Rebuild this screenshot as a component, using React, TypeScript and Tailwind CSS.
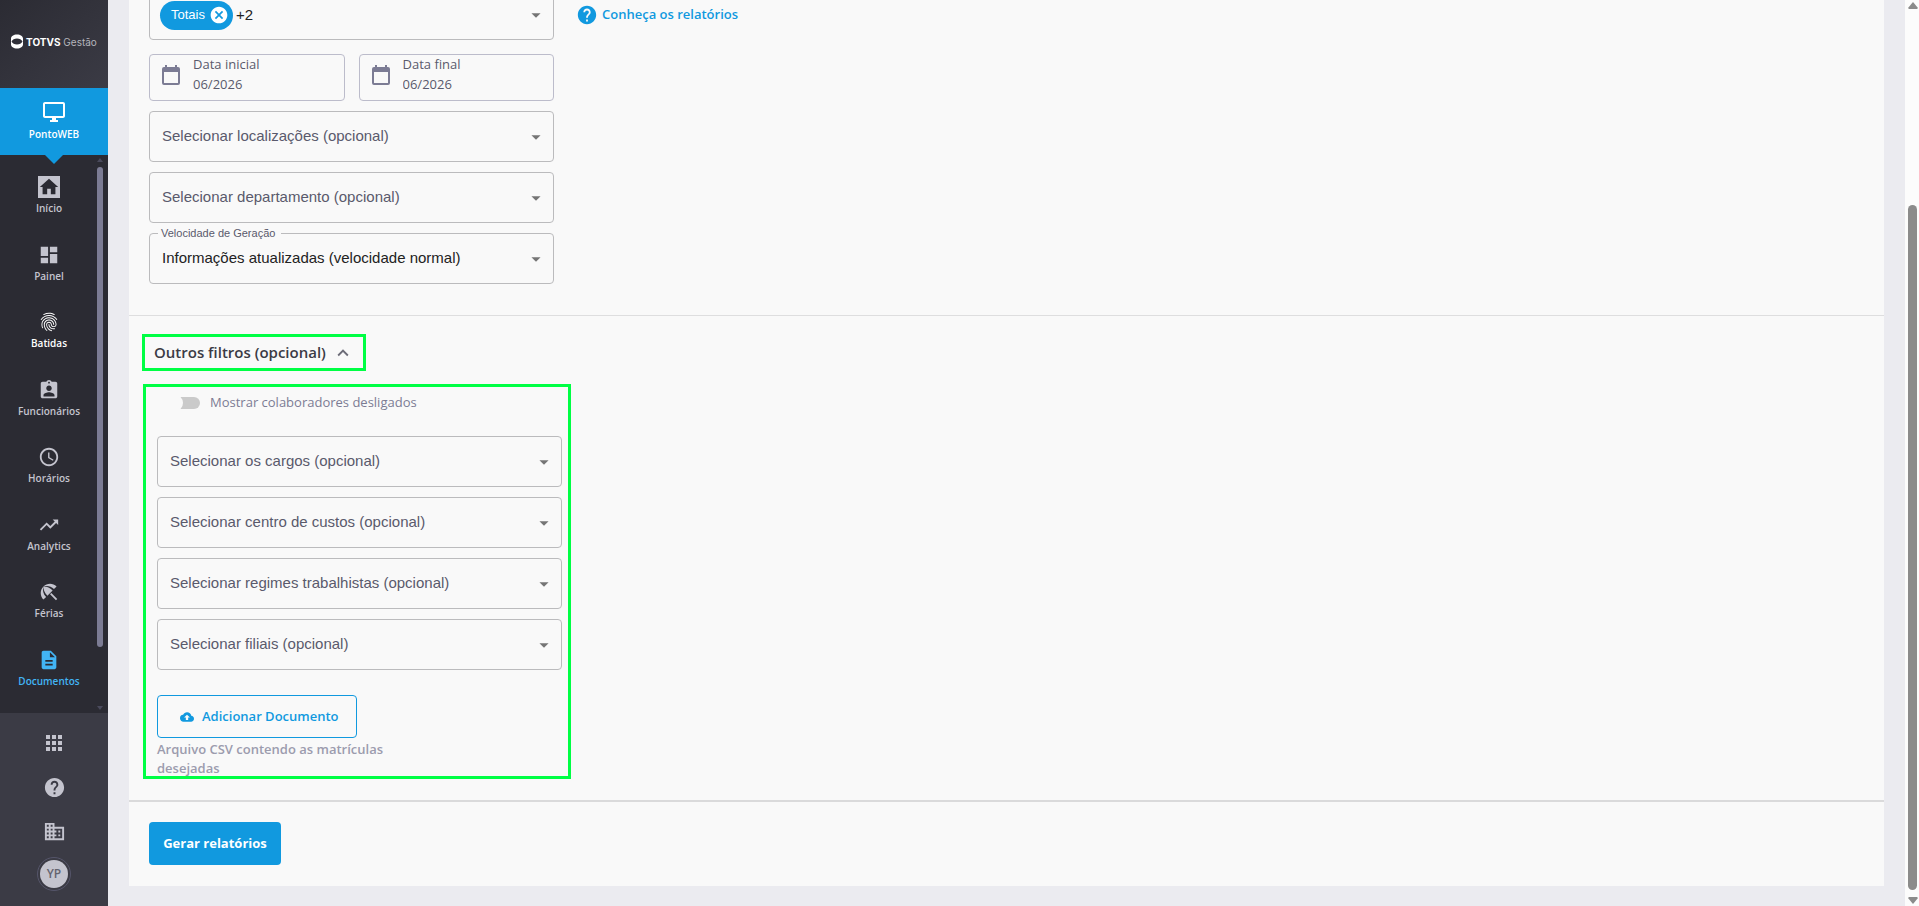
import {
  MdOutlineDesktopWindows,
  MdHome,
  MdDashboard,
  MdFingerprint,
  MdAssignmentInd,
  MdAccessTime,
  MdTrendingUp,
  MdBeachAccess,
  MdDescription,
  MdApps,
  MdHelp,
  MdBusiness,
  MdArrowDropDown,
  MdBackup,
  MdExpandLess,
  MdCancel,
} from 'react-icons/md';
import type { IconType } from 'react-icons';

type NavItem = { label: string; icon: IconType; tone: string };

const navItems: NavItem[] = [
  { label: 'Início', icon: MdHome, tone: 'text-[#c4c4ce]' },
  { label: 'Painel', icon: MdDashboard, tone: 'text-[#c4c4ce]' },
  { label: 'Batidas', icon: MdFingerprint, tone: 'text-white' },
  { label: 'Funcionários', icon: MdAssignmentInd, tone: 'text-[#c4c4ce]' },
  { label: 'Horários', icon: MdAccessTime, tone: 'text-[#c4c4ce]' },
  { label: 'Analytics', icon: MdTrendingUp, tone: 'text-[#c4c4ce]' },
  { label: 'Férias', icon: MdBeachAccess, tone: 'text-[#c4c4ce]' },
  { label: 'Documentos', icon: MdDescription, tone: 'text-[#42b5f5]' },
];

const otherFilters = [
  'Selecionar os cargos (opcional)',
  'Selecionar centro de custos (opcional)',
  'Selecionar regimes trabalhistas (opcional)',
  'Selecionar filiais (opcional)',
];

function Logo() {
  return (
    <div className="flex h-22 items-center justify-center gap-[3px] bg-linear-to-br from-[#2b2b33] to-[#3b3b45] pb-[5px]">
      <svg viewBox="0 0 24 28" className="h-[15px] w-[12px] shrink-0 text-white">
        <path
          fill="currentColor"
          fillRule="evenodd"
          d="M12 0C19 0 24 4 24 8v12c0 4-5 8-12 8S0 24 0 20V8c0-4 5-8 12-8Zm0 8C7 8 3 10 1 14c2 4 6 6 11 6s9-2 11-6c-2-4-6-6-11-6Z"
        />
      </svg>
      <span className="font-['Inter',sans-serif] text-[10px] leading-4 whitespace-nowrap text-[#b4b4bc]">
        <b className="text-white">TOTVS</b> Gestão
      </span>
    </div>
  );
}

function Sidebar() {
  return (
    <aside className="flex h-full w-27 shrink-0 flex-col bg-[#2b2b33]">
      <Logo />
      <a
        href="#ponto"
        className="relative flex h-[67px] shrink-0 flex-col items-center gap-[2px] bg-[#1199df] pt-3 text-[10px] leading-4 font-semibold text-white"
      >
        <MdOutlineDesktopWindows className="size-6" />
        PontoWEB
        <svg viewBox="0 0 18 9" className="absolute top-full h-[9px] w-[18px] text-[#1199df]">
          <path fill="currentColor" d="M0 0h18L9 9z" />
        </svg>
      </a>
      <div className="flex min-h-0 flex-1">
        <nav className="flex flex-1 flex-col py-[9px] pl-[1px]">
          {navItems.map(({ label, icon: Icon, tone }) => (
            <a
              key={label}
              href="#"
              className={`flex flex-1 flex-col items-center pt-3 text-[10px] leading-4 font-semibold ${tone}`}
            >
              <span className="flex h-6 items-start">
                {label === 'Início' ? (
                  <span className="flex size-[22px] items-center justify-center bg-[#c4c4ce] text-[#2b2b33]">
                    <Icon className="size-[22px]" />
                  </span>
                ) : (
                  <Icon className="size-[22px]" />
                )}
              </span>
              {label}
            </a>
          ))}
        </nav>
        <div className="mr-[5px] flex w-[6px] flex-col items-center justify-between pt-[3px] pb-[3px]">
          <svg viewBox="0 0 6 4" className="h-1 w-[6px] text-[#4a4a5c]">
            <path fill="currentColor" d="M3 0l3 4H0z" />
          </svg>
          <div className="mt-[5px] mb-[59px] w-full flex-1 rounded-full bg-[#7c7c94]" />
          <svg viewBox="0 0 6 4" className="h-1 w-[6px] text-[#4a4a5c]">
            <path fill="currentColor" d="M3 4l3-4H0z" />
          </svg>
        </div>
      </div>
      <div className="flex h-[193px] shrink-0 flex-col items-center bg-[#3b3b45] pt-2 text-[#c4c4ce]">
        <button type="button" aria-label="Aplicativos" className="h-11">
          <MdApps className="size-6" />
        </button>
        <button type="button" aria-label="Ajuda" className="h-11">
          <MdHelp className="size-[23px]" />
        </button>
        <button type="button" aria-label="Empresa" className="h-11">
          <MdBusiness className="size-[23px]" />
        </button>
        <button
          type="button"
          className="mt-1 flex size-[34px] items-center justify-center rounded-full border border-[#55556a] p-[2px]"
        >
          <span className="flex size-full items-center justify-center rounded-full bg-[#c4c4ce] text-xs font-semibold text-[#63636f]">
            YP
          </span>
        </button>
      </div>
    </aside>
  );
}

function SelectField({ text, label }: { text: string; label?: string }) {
  return (
    <div className="relative font-['Liberation_Sans',sans-serif]">
      {label && (
        <label
          htmlFor="velocidade"
          className="absolute -top-2 left-[9px] bg-[#f9f9f9] pr-[6px] pl-[3px] text-[11px] leading-4 text-[#5a5a6c]"
        >
          {label}
        </label>
      )}
      <select
        id={label ? 'velocidade' : undefined}
        aria-label={label ? undefined : text}
        className={`block h-[51px] w-full appearance-none rounded-sm border border-[#bbbbbd] bg-transparent px-3 text-[15px] ${
          label ? 'text-[#222222]' : 'text-[#5a5a6c]'
        }`}
      >
        <option>{text}</option>
      </select>
      <MdArrowDropDown className="pointer-events-none absolute top-[15px] right-[7px] size-[22px] text-[#757575]" />
    </div>
  );
}

function CalendarIcon() {
  return (
    <svg viewBox="0 0 18 20" className="mt-[10px] h-5 w-[18px] shrink-0 text-[#7c7c94]">
      <path
        fill="currentColor"
        fillRule="evenodd"
        d="M3 0h2v2h8V0h2v2h1a2 2 0 0 1 2 2v14a2 2 0 0 1-2 2H2a2 2 0 0 1-2-2V4a2 2 0 0 1 2-2h1zM2 7v11h14V7z"
      />
    </svg>
  );
}

function DateField({ id, label }: { id: string; label: string }) {
  return (
    <div className="flex h-[47px] flex-1 items-start gap-[13px] rounded-sm border border-[#bcbccb] px-3 text-[13px] text-[#5a5a6c]">
      <CalendarIcon />
      <div className="flex min-w-0 flex-col">
        <label htmlFor={id} className="leading-[18px]">
          {label}
        </label>
        <input id={id} defaultValue="06/2026" className="w-full leading-[22px] outline-none" />
      </div>
    </div>
  );
}

function ReportFilters() {
  return (
    <section className="flex items-start gap-[22px] border-b border-[#dededf] px-5 pb-[31px]">
      <div className="flex w-[405px] flex-col gap-[10px]">
        <div className="relative mb-1 flex h-[50px] items-center rounded-sm border border-[#bbbbbd] pl-[10px] font-['Liberation_Sans',sans-serif]">
          <span className="flex h-[29px] items-center gap-1 rounded-full bg-[#1199df] pr-1 pl-[11px] text-[13px] text-white">
            Totais
            <button type="button" aria-label="Remover Totais">
              <MdCancel className="size-5" />
            </button>
          </span>
          <select
            aria-label="Relatórios"
            className="h-full flex-1 appearance-none bg-transparent pl-[3px] text-[15px] text-[#222222]"
          >
            <option>+2</option>
          </select>
          <MdArrowDropDown className="pointer-events-none absolute right-[6px] size-[22px] text-[#757575]" />
        </div>
        <div className="flex gap-[14px]">
          <DateField id="data-inicial" label="Data inicial" />
          <DateField id="data-final" label="Data final" />
        </div>
        <SelectField text="Selecionar localizações (opcional)" />
        <SelectField text="Selecionar departamento (opcional)" />
        <SelectField
          label="Velocidade de Geração"
          text="Informações atualizadas (velocidade normal)"
        />
      </div>
      <a href="#" className="flex h-[50px] items-center gap-1 text-[13px] font-semibold text-[#1199df]">
        <MdHelp className="size-[22px]" />
        Conheça os relatórios
      </a>
    </section>
  );
}

function OtherFilters() {
  return (
    <section className="flex flex-col items-start gap-[13px] border-b-2 border-[#dadadb] px-[13px] pt-[18px] pb-[21px]">
      <button
        type="button"
        className="flex h-[37px] w-[224px] items-center gap-[6px] border-3 border-[#00ff44] pl-[9px] text-[15px] font-semibold whitespace-nowrap text-[#3b3b45]"
      >
        Outros filtros (opcional)
        <MdExpandLess className="size-[22px] text-[#6c6c78]" />
      </button>
      <div className="ml-[1px] flex h-[395px] w-[428px] flex-col items-start border-3 border-[#00ff44] px-[11px]">
        <label className="flex h-8 shrink-0 items-center text-[13px] text-[#7c7c94]">
          <input type="checkbox" className="peer sr-only" />
          <span className="ml-3 flex h-3 w-[31px] items-center rounded-full bg-[#cacaca]">
            <span className="size-[18px] shrink-0 -translate-x-1 rounded-full bg-[#f9f9f9]" />
          </span>
          <span className="ml-[10px]">Mostrar colaboradores desligados</span>
        </label>
        <div className="mt-[17px] flex w-[405px] flex-col gap-[10px]">
          {otherFilters.map((text) => (
            <SelectField key={text} text={text} />
          ))}
        </div>
        <button
          type="button"
          className="mt-[25px] flex h-[43px] w-[200px] shrink-0 items-center gap-2 rounded-sm border border-[#1199df] pl-[22px] text-[13px] font-semibold whitespace-nowrap text-[#1199df]"
        >
          <MdBackup className="size-[14px]" />
          Adicionar Documento
        </button>
        <p className="mt-[2px] w-[250px] text-[13px] leading-[19px] font-semibold text-[#9c9cae]">
          Arquivo CSV contendo as matrículas desejadas
        </p>
      </div>
    </section>
  );
}

function PageScrollbar() {
  return (
    <div className="flex w-[14px] shrink-0 flex-col items-center bg-[#fcfcfc] py-[2px] pl-[1px] text-[#8b8b8b]">
      <svg viewBox="0 0 10 7" className="h-[7px] w-[10px]">
        <path fill="currentColor" d="M5 0l5 6-1 1H1L0 6z" />
      </svg>
      <div className="flex w-[9px] flex-1 flex-col pt-[196px] pb-[7px]">
        <div className="flex-1 rounded-full bg-current" />
      </div>
      <svg viewBox="0 0 10 7" className="h-[7px] w-[10px]">
        <path fill="currentColor" d="M5 7l5-6-1-1H1L0 1z" />
      </svg>
    </div>
  );
}

export default function App() {
  return (
    <div className="flex h-screen overflow-hidden bg-[#ebebf0] font-['Open_Sans',sans-serif]">
      <Sidebar />
      {/* content rests at the end of its scroll */}
      <main className="flex min-w-0 flex-1 flex-col justify-end overflow-hidden px-[21px] pb-5">
        <div className="bg-[#f9f9f9]">
          <ReportFilters />
          <OtherFilters />
          <div className="px-5 pt-5 pb-[21px]">
            <button
              type="button"
              className="h-[43px] w-[132px] rounded-sm bg-[#1199df] text-[13px] font-bold text-white"
            >
              Gerar relatórios
            </button>
          </div>
        </div>
      </main>
      <PageScrollbar />
    </div>
  );
}
